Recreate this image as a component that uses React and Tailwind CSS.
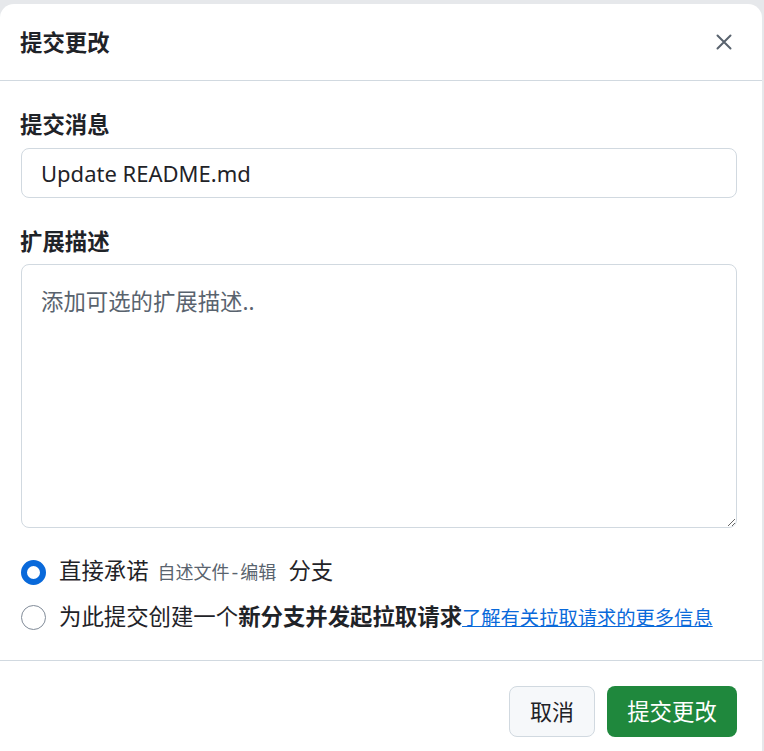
export default function App() {
  const cjk = { fontFamily: '"Noto Sans", "Noto Sans CJK SC", sans-serif' };
  return (
    <div className="w-[764px] h-[751px] overflow-hidden bg-[#e6e8eb] pt-[4px] pr-[2px]" style={cjk}>
      <div className="bg-white rounded-t-[14px] h-full text-[#1f2328]">
        <div className="h-[77px] flex items-center justify-between pl-[20px] pr-[30px] border-b border-[#d1d9e0]">
          <h1 className="text-[22.4px] font-bold leading-[30px] mt-[2px]">提交更改</h1>
          <svg width="16" height="16" viewBox="0 0 16 16" className="text-[#59636e]">
            <path d="M1.5 1.5 L14.5 14.5 M14.5 1.5 L1.5 14.5" stroke="currentColor" strokeWidth="2" strokeLinecap="round" />
          </svg>
        </div>
        <div className="pl-[21px] pr-[25px] pt-[29px] pb-[28px] border-b border-[#d1d9e0]">
          <div className="text-[22.4px] font-bold leading-[30px] mb-[8px] -ml-[1px]">提交消息</div>
          <div className="h-[50px] border border-[#d1d9e0] rounded-[8px] flex items-center px-[19px] text-[22px]">
            Update README.md
          </div>
          <div className="text-[22.4px] font-bold leading-[30px] mt-[29px] mb-[7px] -ml-[1px]">扩展描述</div>
          <textarea
            className="block w-full h-[264px] border border-[#d1d9e0] rounded-[8px] px-[19px] py-[22px] text-[22.4px] leading-[30px] resize-y outline-none placeholder:text-[#59636e]"
            placeholder="添加可选的扩展描述.."
            style={cjk}
          />
          <div className="flex items-center h-[30px] mt-[29px]">
            <span className="w-[25px] h-[25px] rounded-full border-[6px] border-[#0969da] bg-white shrink-0" />
            <span className="ml-[13px] text-[22.4px] leading-[30px] whitespace-nowrap flex items-baseline">
              <span>直接承诺</span>
              <span className="ml-[9px] mr-[12px] text-[18px] text-[#59636e]" style={{ fontFamily: '"Liberation Mono", "Noto Sans CJK SC", monospace' }}>自述文件-编辑</span>
              <span>分支</span>
            </span>
          </div>
          <div className="flex items-center h-[30px] mt-[15px]">
            <span className="w-[25px] h-[25px] rounded-full border border-[#818b98] bg-white shrink-0" />
            <span className="ml-[13px] text-[22.4px] leading-[30px] whitespace-nowrap">
              为此提交创建一个<b>新分支并发起拉取请求</b>
              <a className="text-[#0969da] underline text-[19.3px]" href="#">了解有关拉取请求的更多信息</a>
            </span>
          </div>
        </div>
        <div className="flex justify-end gap-[12px] pr-[25px] pt-[25px]">
          <button className="h-[51px] w-[86px] rounded-[8px] bg-[#f6f8fa] border border-[#d1d9e0] text-[22px] text-[#1f2328]" style={cjk}>取消</button>
          <button className="h-[51px] w-[130px] rounded-[8px] bg-[#1f883d] text-[22.4px] text-white" style={cjk}>提交更改</button>
        </div>
      </div>
    </div>
  );
}
